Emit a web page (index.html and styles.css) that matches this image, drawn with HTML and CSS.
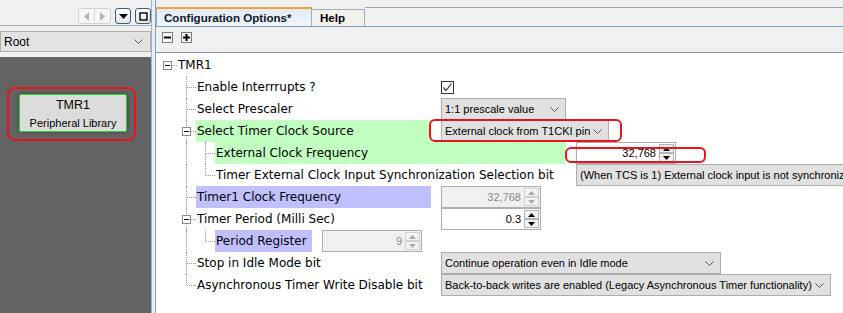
FILE: index.html
```html
<!DOCTYPE html>
<html lang="en">
<head>
    <meta charset="UTF-8">
    <title>TMR1 - Configuration Options</title>
    <link rel="stylesheet" href="styles.css">
</head>
<body>
    <div class="side">
        <div class="side-bar">
            <div class="nav-pair">
                <span class="nav-btn"><svg width="5" height="9" viewBox="0 0 5 9"><path d="M5 0 L0 4.5 L5 9 Z" fill="#b4b4b4"/></svg></span>
                <span class="nav-btn"><svg width="5" height="9" viewBox="0 0 5 9"><path d="M0 0 L5 4.5 L0 9 Z" fill="#b4b4b4"/></svg></span>
            </div>
            <span class="win-btn"><svg width="9" height="5" viewBox="0 0 9 5"><path d="M0 0 H9 L4.5 5 Z" fill="#000"/></svg></span>
            <span class="win-btn"><svg width="9" height="9" viewBox="0 0 9 9"><rect x="1" y="1" width="7" height="7" fill="none" stroke="#000" stroke-width="1.4"/></svg></span>
        </div>
        <div class="side-combo">
            <span>Root</span>
            <svg class="chev" width="9" height="5" viewBox="0 0 9 5"><polyline points="0.5,0.5 4.5,4.5 8.5,0.5" fill="none" stroke="#555"/></svg>
        </div>
        <div class="canvas">
            <div class="node mark mark-node">
                <div class="node-title">TMR1</div>
                <div class="node-sub">Peripheral Library</div>
            </div>
        </div>
    </div>
    <div class="split"></div>
    <div class="main">
        <div class="tabs">
            <div class="tab tab-active">Configuration Options*</div>
            <div class="tab">Help</div>
            <div class="tab-fill"></div>
        </div>
        <div class="toolbar">
            <span class="tbtn"><svg width="9" height="9" viewBox="0 0 9 9"><rect x="1" y="3.5" width="7" height="2" fill="#000"/></svg></span>
            <span class="tbtn"><svg width="9" height="9" viewBox="0 0 9 9"><rect x="1" y="3.5" width="7" height="2" fill="#000"/><rect x="3.5" y="1" width="2" height="7" fill="#000"/></svg></span>
        </div>
        <div class="tree">
            <div class="row">
                <span class="cell root"><span class="box"></span></span>
                <span class="label">TMR1</span>
            </div>
            <div class="row">
                <span class="cell"></span><span class="cell tee"></span>
                <span class="label w1">Enable Interrrupts ?</span>
                <span class="val check"><svg width="11" height="11" viewBox="0 0 11 11"><polyline points="1.5,5.5 4,8.5 9.5,1.5" fill="none" stroke="#333" stroke-width="1.2"/></svg></span>
            </div>
            <div class="row">
                <span class="cell"></span><span class="cell tee"></span>
                <span class="label w1">Select Prescaler</span>
                <span class="val combo c-pre">1:1 prescale value<svg class="chev" width="9" height="5" viewBox="0 0 9 5"><polyline points="0.5,0.5 4.5,4.5 8.5,0.5" fill="none" stroke="#555"/></svg></span>
            </div>
            <div class="row">
                <span class="cell"></span><span class="cell tee"><span class="box"></span></span>
                <span class="label w1 green">Select Timer Clock Source</span>
                <span class="val combo c-src mark mark-src">External clock from T1CKI pin<svg class="chev" width="9" height="5" viewBox="0 0 9 5"><polyline points="0.5,0.5 4.5,4.5 8.5,0.5" fill="none" stroke="#555"/></svg></span>
            </div>
            <div class="row">
                <span class="cell"></span><span class="cell pipe"></span><span class="cell tee"></span>
                <span class="label w2 green">External Clock Frequency</span>
                <span class="val spin mark mark-freq">
                    <span class="spin-val">32,768</span>
                    <span class="spin-btns">
                        <span><svg width="7" height="4" viewBox="0 0 7 4"><path d="M0 4 L3.5 0 L7 4 Z" fill="#000"/></svg></span>
                        <span><svg width="7" height="4" viewBox="0 0 7 4"><path d="M0 0 H7 L3.5 4 Z" fill="#000"/></svg></span>
                    </span>
                </span>
            </div>
            <div class="row">
                <span class="cell"></span><span class="cell pipe"></span><span class="cell ell"></span>
                <span class="label w2">Timer External Clock Input Synchronization Selection bit</span>
                <span class="val combo c-sync">(When TCS is 1) External clock input is not synchronized</span>
            </div>
            <div class="row">
                <span class="cell"></span><span class="cell tee"></span>
                <span class="label w1 blue">Timer1 Clock Frequency</span>
                <span class="val spin off">
                    <span class="spin-val">32,768</span>
                    <span class="spin-btns">
                        <span><svg width="7" height="4" viewBox="0 0 7 4"><path d="M0 4 L3.5 0 L7 4 Z" fill="#a8a8a8"/></svg></span>
                        <span><svg width="7" height="4" viewBox="0 0 7 4"><path d="M0 0 H7 L3.5 4 Z" fill="#a8a8a8"/></svg></span>
                    </span>
                </span>
            </div>
            <div class="row">
                <span class="cell"></span><span class="cell tee"><span class="box"></span></span>
                <span class="label w1">Timer Period (Milli Sec)</span>
                <span class="val spin">
                    <span class="spin-val">0.3</span>
                    <span class="spin-btns">
                        <span><svg width="7" height="4" viewBox="0 0 7 4"><path d="M0 4 L3.5 0 L7 4 Z" fill="#000"/></svg></span>
                        <span><svg width="7" height="4" viewBox="0 0 7 4"><path d="M0 0 H7 L3.5 4 Z" fill="#000"/></svg></span>
                    </span>
                </span>
            </div>
            <div class="row">
                <span class="cell"></span><span class="cell pipe"></span><span class="cell ell"></span>
                <span class="label w3 blue">Period Register</span>
                <span class="val spin off">
                    <span class="spin-val">9</span>
                    <span class="spin-btns">
                        <span><svg width="7" height="4" viewBox="0 0 7 4"><path d="M0 4 L3.5 0 L7 4 Z" fill="#a8a8a8"/></svg></span>
                        <span><svg width="7" height="4" viewBox="0 0 7 4"><path d="M0 0 H7 L3.5 4 Z" fill="#a8a8a8"/></svg></span>
                    </span>
                </span>
            </div>
            <div class="row">
                <span class="cell"></span><span class="cell tee"></span>
                <span class="label w1">Stop in Idle Mode bit</span>
                <span class="val combo c-idle">Continue operation even in Idle mode<svg class="chev" width="9" height="5" viewBox="0 0 9 5"><polyline points="0.5,0.5 4.5,4.5 8.5,0.5" fill="none" stroke="#555"/></svg></span>
            </div>
            <div class="row">
                <span class="cell"></span><span class="cell ell"></span>
                <span class="label w1">Asynchronous Timer Write Disable bit</span>
                <span class="val combo c-async">Back-to-back writes are enabled (Legacy Asynchronous Timer functionality)<svg class="chev" width="9" height="5" viewBox="0 0 9 5"><polyline points="0.5,0.5 4.5,4.5 8.5,0.5" fill="none" stroke="#555"/></svg></span>
            </div>
        </div>
    </div>
</body>
</html>
```

FILE: styles.css
```css
* {
    box-sizing: border-box;
}
html, body {
    margin: 0;
    padding: 0;
}
body {
    display: flex;
    width: 843px;
    height: 313px;
    overflow: hidden;
    background: #f0f0f0;
    font-family: "DejaVu Sans", sans-serif;
    font-size: 12px;
    color: #000;
}

/* left panel */
.side {
    width: 151px;
    flex: none;
    display: flex;
    flex-direction: column;
}
.side-bar {
    height: 26px;
    border-bottom: 1px solid #a4b3c4;
    display: flex;
    justify-content: flex-end;
    align-items: flex-start;
    gap: 4px;
    padding-top: 8px;
}
.nav-pair {
    display: flex;
    width: 33px;
    height: 16px;
    border: 1px solid #c8d3e0;
    border-radius: 3px;
    background: #f6f6f6;
}
.nav-btn {
    flex: 1;
    display: flex;
    align-items: center;
    justify-content: center;
}
.nav-btn + .nav-btn {
    border-left: 1px solid #d4dce6;
}
.win-btn {
    width: 16px;
    height: 16px;
    border: 1px solid #3d5b7d;
    border-radius: 3px;
    background: linear-gradient(#ffffff, #e4e4e4);
    display: flex;
    align-items: center;
    justify-content: center;
}
.side-combo {
    margin-top: 5px;
    height: 21px;
    border: 1px solid #adadad;
    background: #e3e3e3;
    display: flex;
    align-items: center;
    justify-content: space-between;
    padding: 0 7px 0 3px;
    font-family: "Liberation Sans", Arial, sans-serif;
    font-size: 12px;
}
.canvas {
    margin-top: 5px;
    flex: 1;
    background: #646464;
    position: relative;
}
.node {
    position: absolute;
    left: 19px;
    top: 37px;
    width: 108px;
    height: 38px;
    background: #dcdcdc;
    border: 1px solid #27d427;
    border-radius: 2px;
    box-shadow: 0 0 5px rgba(0, 0, 0, 0.35);
    text-align: center;
    font-family: "Liberation Sans", Arial, sans-serif;
    padding-top: 2px;
}
.node-title {
    font-size: 12.5px;
    line-height: 16px;
}
.node-sub {
    font-size: 11px;
    line-height: 14px;
    margin-top: 3px;
}

/* red annotation frames */
.mark {
    position: relative;
}
.mark::after {
    content: "";
    position: absolute;
    border: 2px solid #e8141c;
    border-radius: 6px;
    pointer-events: none;
}
.mark-node::after {
    left: -13px;
    right: -10px;
    top: -8px;
    bottom: -10px;
    border-radius: 8px;
}
.mark-src::after {
    left: -13px;
    right: -14px;
    top: -2px;
    bottom: -1px;
}
.mark-freq::after {
    left: -12px;
    right: -31px;
    top: 4px;
    bottom: 0;
}

.split {
    width: 5px;
    flex: none;
    background: #eaeef4;
    border-left: 1px solid #a3b4c8;
    border-right: 1px solid #86a0bd;
}

/* right panel */
.main {
    flex: 1;
    min-width: 0;
    display: flex;
    flex-direction: column;
}
.tabs {
    height: 27px;
    display: flex;
    align-items: flex-end;
    border-bottom: 1px solid #7d9dbf;
}
.tab {
    height: 17px;
    width: 53px;
    padding-left: 8px;
    border: 1px solid #a3abb5;
    border-bottom: 0;
    border-left: 0;
    background: #f3f1eb;
    font-family: "Liberation Sans", Arial, sans-serif;
    font-weight: bold;
    font-size: 11.6px;
    line-height: 16px;
}
.tab-active {
    height: 19px;
    width: 156px;
    padding-left: 7px;
    border-left: 1px solid #a3abb5;
    border-top: 2px solid #f0a233;
    background: linear-gradient(#e2eaf7, #f1f5fb);
    line-height: 17px;
    color: #10182a;
}
.tab-fill {
    flex: 1;
    height: 19px;
    border-top: 1px solid #95a6ba;
}
.toolbar {
    height: 26px;
    border-bottom: 1px solid #8c959f;
    display: flex;
    align-items: flex-start;
    gap: 8px;
    padding: 5px 0 0 6px;
}
.tbtn {
    width: 11px;
    height: 11px;
    border: 1px solid #7c7c7c;
    background: #f7f7f7;
    display: flex;
}

/* tree */
.tree {
    flex: 1;
    background: #fff;
    padding: 1px 0 0 2px;
    overflow: hidden;
}
.row {
    display: flex;
    height: 22px;
    align-items: center;
    white-space: nowrap;
}
.cell {
    width: 19px;
    height: 22px;
    flex: none;
    position: relative;
}
.cell.pipe::before,
.cell.tee::before,
.cell.ell::before {
    content: "";
    position: absolute;
    left: 9px;
    top: 0;
    bottom: 0;
    border-left: 1px dotted #9a9a9a;
}
.cell.ell::before {
    bottom: 11px;
}
.cell.root::after,
.cell.tee::after,
.cell.ell::after {
    content: "";
    position: absolute;
    left: 10px;
    right: 0;
    top: 11px;
    border-top: 1px dotted #9a9a9a;
}
.box {
    position: absolute;
    left: 5px;
    top: 7px;
    width: 9px;
    height: 9px;
    border: 1px solid #8a8a8a;
    background: #fff;
    z-index: 1;
}
.box::before {
    content: "";
    position: absolute;
    left: 1px;
    top: 3px;
    width: 5px;
    height: 1px;
    background: #000;
}
.label {
    flex: none;
    height: 22px;
    line-height: 22px;
    padding-left: 1px;
}
.w1 {
    width: 235px;
}
.w2 {
    width: 351px;
}
.w3 {
    width: 97px;
}
.green {
    background: #c0ffc0;
}
.blue {
    background: #c0c0ff;
}
.val {
    margin-left: 10px;
    flex: none;
}

/* value editors */
.check {
    width: 13px;
    height: 13px;
    border: 1px solid #333;
    background: #fff;
    display: flex;
    align-items: center;
    justify-content: center;
}
.combo {
    height: 22px;
    border: 1px solid #adadad;
    background: #e1e1e1;
    display: flex;
    align-items: center;
    justify-content: space-between;
    padding: 0 6px 0 3px;
    font-family: "Liberation Sans", Arial, sans-serif;
    font-size: 11px;
    overflow: hidden;
}
.c-pre {
    width: 125px;
}
.c-src {
    width: 168px;
    overflow: visible;
}
.c-sync {
    width: 320px;
}
.c-idle {
    width: 280px;
}
.c-async {
    width: 390px;
}
.spin {
    display: flex;
    width: 100px;
    height: 22px;
    border: 1px solid #adadad;
    background: #fff;
    font-family: "Liberation Sans", Arial, sans-serif;
    font-size: 11px;
}
.spin.off {
    background: #f0f0f0;
    color: #8a8a8a;
}
.spin-val {
    flex: 1;
    text-align: right;
    padding-right: 3px;
    line-height: 20px;
}
.spin-btns {
    width: 16px;
    display: flex;
    flex-direction: column;
    padding: 1px 1px 1px 0;
}
.spin-btns span {
    flex: 1;
    border: 1px solid #b4b4b4;
    background: #f3f3f3;
    display: flex;
    align-items: center;
    justify-content: center;
}
.spin.off .spin-btns span {
    border-color: #d0d0d0;
}
```
